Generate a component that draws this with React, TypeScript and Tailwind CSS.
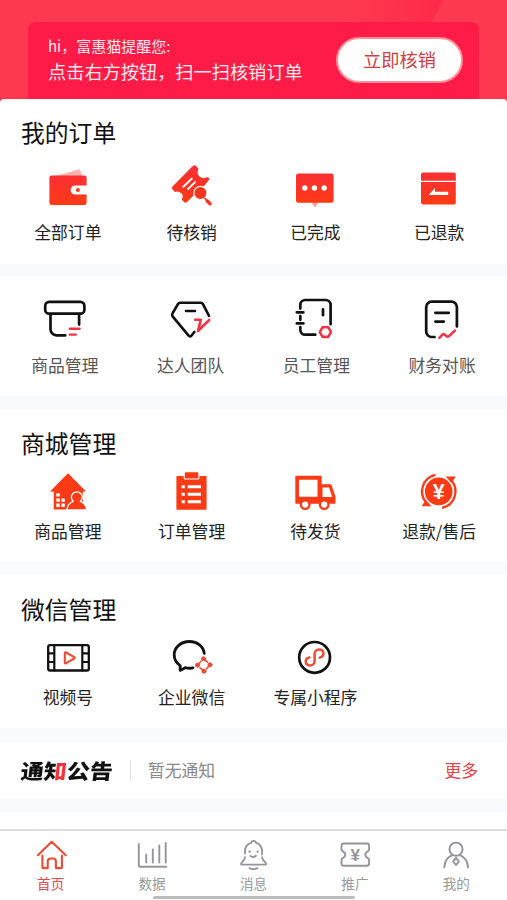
import type { ReactNode } from 'react';

type Entry = { label: string; icon: ReactNode };

const Icon = ({ children }: { children: ReactNode }) => (
  <svg viewBox="0 0 48 48" className="size-12 overflow-visible" fill="none" strokeLinecap="round" strokeLinejoin="round">
    {children}
  </svg>
);

const TabIcon = ({ children }: { children: ReactNode }) => (
  <svg viewBox="0 0 32 32" className="size-8 overflow-visible" fill="none" stroke="currentColor" strokeWidth="1.9" strokeLinecap="round" strokeLinejoin="round">
    {children}
  </svg>
);

const orders: Entry[] = [
  {
    label: '全部订单',
    icon: (
      <Icon>
        <path d="M11 12 34.5 5.4Q35.8 5.2 36.3 6.4L38.5 12Z" fill="#ffb5b0" />
        <rect x="5.4" y="11.4" width="37.2" height="29.6" rx="2.2" fill="url(#red)" />
        <path d="M43 21.4H31.2a4.6 4.6 0 0 0 0 9.2H43Z" fill="#fff" />
        <circle cx="33.9" cy="26" r="2" fill="#fb3420" />
      </Icon>
    ),
  },
  {
    label: '待核销',
    icon: (
      <Icon>
        <path d="M25 1.8Q26.7.6 28 1.8L30.5 5Q28.5 9 31 12Q34.5 15.5 38.5 13.3Q40.6 12.8 41.6 15L37 21 24 33 19 38Q17.5 39.5 16 38L13.6 35.6Q16 32 13.5 29.5Q10.5 26.5 7 28L4.5 25.5Q3 24 4.5 22.5Z" fill="url(#red)" />
        <path d="m15.4 22.8 8.4-8.2M20 25.2l7-7" stroke="#fff" strokeWidth="1.9" />
        <circle cx="32.4" cy="29" r="6.6" fill="#fb3420" stroke="#fff" strokeWidth="1.2" />
        <path d="m36.8 34.3 1.2 1.2" stroke="#fb3420" strokeWidth="1.6" />
        <path d="m39 36.8 3 3" stroke="#fb3420" strokeWidth="3.4" />
      </Icon>
    ),
  },
  {
    label: '已完成',
    icon: (
      <Icon>
        <path d="M20.4 38.5h7l-3.4 5Z" fill="#ff9d90" />
        <rect x="5" y="9.4" width="37.6" height="29.4" rx="2.4" fill="url(#red)" />
        <g fill="#fff">
          <circle cx="13.8" cy="24" r="2.7" />
          <circle cx="23.4" cy="24" r="2.7" />
          <circle cx="33.2" cy="24" r="2.7" />
        </g>
      </Icon>
    ),
  },
  {
    label: '已退款',
    icon: (
      <Icon>
        <rect x="6" y="8.4" width="34.8" height="32" rx="2" fill="url(#red)" />
        <path d="M6 17.4h34.8" stroke="#fff" strokeWidth="1.3" strokeLinecap="butt" />
        <path d="M13.6 31 20 24v3.8h13.2V31Z" fill="#fff" />
      </Icon>
    ),
  },
];

const tools: Entry[] = [
  {
    label: '商品管理',
    icon: (
      <Icon>
        <g stroke="#111" strokeWidth="2.7">
          <rect x="4.2" y="6.9" width="39.2" height="11.8" rx="4" />
          <path d="M9.5 19v15.3a6 6 0 0 0 6 6h8.8M38.1 19v10.6" />
        </g>
        <path d="M28.8 33.7h9.8M28.8 39.6h6" stroke="#ee3445" strokeWidth="2.4" />
      </Icon>
    ),
  },
  {
    label: '达人团队',
    icon: (
      <Icon>
        <path d="m42 20.8-6-11.6Q35.2 7.7 33.6 7.7H13.2Q11.8 7.7 11 9L5.4 18.6Q4.6 20 5.6 21.4L21.6 40.7Q23 42.2 24.4 40.6L27.4 37M19 16h9" stroke="#111" strokeWidth="2.6" />
        <path d="M28.2 24.7h5.6L31 36l11.2-11" stroke="#ee3445" strokeWidth="2.6" />
      </Icon>
    ),
  },
  {
    label: '员工管理',
    icon: (
      <Icon>
        <path d="M8.3 13.6V10a5 5 0 0 1 5-5h20.3a5 5 0 0 1 5 5v19.2M8.3 21v3.8M8.3 32v2.7a5 5 0 0 0 5 5h10M4.8 17.3h6.6M4.8 28.4h6.6M31 14.4v5.8" stroke="#111" strokeWidth="2.7" />
        <path d="M30.6 32.2h5.6l2.8 4.9-2.8 4.8h-5.6l-2.8-4.8Z" stroke="#ee3445" strokeWidth="2.6" />
      </Icon>
    ),
  },
  {
    label: '财务对账',
    icon: (
      <Icon>
        <path d="M38.9 31.4V12.2a5.5 5.5 0 0 0-5.5-5.5H13.7a5.5 5.5 0 0 0-5.5 5.5v24.3a5.5 5.5 0 0 0 5.5 5.5h2.8M17.4 17.8h13.4M17.4 26.6h8.4" stroke="#111" strokeWidth="2.7" />
        <path d="m21.4 42.8 3-3.2q1-1 2.2 0l2 1.6q1.2 1 2.4-.1l6-5.6" stroke="#ee3445" strokeWidth="2.5" />
      </Icon>
    ),
  },
];

const mall: Entry[] = [
  {
    label: '商品管理',
    icon: (
      <Icon>
        <path d="M24 5.3 42 23.4h-3.2v18H9.7v-18H6Z" fill="#fc3a15" />
        <path d="M12.3 25.2h3.4v3.4h-3.4zM12.3 30.4h3.4v3.4h-3.4zM17.4 30.4h3.4v3.4h-3.4zM12.3 35.6h3.4V39h-3.4zM17.4 35.6h3.4V39h-3.4z" fill="#fff" />
        <path d="M23 42q.3-6.4 6.4-8.6a5.4 5.4 0 1 1 6.8 0Q42.3 35.6 42.6 42Z" fill="#fc3a15" stroke="#fff" strokeWidth="1.3" />
      </Icon>
    ),
  },
  {
    label: '订单管理',
    icon: (
      <Icon>
        <rect x="8.4" y="8" width="30.2" height="33.7" rx=".8" fill="#fc3a15" />
        <rect x="16.2" y="3.8" width="14.7" height="7.2" rx="1" fill="#fc3a15" stroke="#fff" strokeWidth="1.1" />
        <path d="M13.6 17.2h3.2v3.1h-3.2zM19.7 17.2H33v3.1H19.7zM13.6 24.7h3.2v3.1h-3.2zM19.7 24.7H33v3.1H19.7zM13.6 32.2h3.2v3.1h-3.2zM19.7 32.2H33v3.1H19.7z" fill="#fff" />
      </Icon>
    ),
  },
  {
    label: '待发货',
    icon: (
      <Icon>
        <path d="M5.2 7.7h24.5q1 0 1 1v7.6h8.6q1 0 1.3 1l3.9 11.2v6.3q0 .9-.9.9H5.2q-.9 0-.9-.9V8.6q0-.9.9-.9Z" fill="#fc3a15" />
        <path d="M8 11.7h18.5v17H8zM31.5 19.6H38l3.2 9.5h-9.7Z" fill="#fff" />
        <circle cx="14.2" cy="36.6" r="4.3" fill="#fff" stroke="#fc3a15" strokeWidth="2.3" />
        <circle cx="33.2" cy="36.6" r="4.3" fill="#fff" stroke="#fc3a15" strokeWidth="2.3" />
      </Icon>
    ),
  },
  {
    label: '退款/售后',
    icon: (
      <Icon>
        <circle cx="23.7" cy="23.4" r="13.8" fill="#fc3a15" />
        <path d="M19.5 7.2A16.8 16.8 0 0 0 10.8 34M28 39.6A16.8 16.8 0 0 0 36.7 12.8" stroke="#fc3a15" strokeWidth="2.3" />
        <path d="m6.6 38.2 4.2-6.4 5.6 6.4ZM40.8 8.5l-4.2 6.4-6-6.4Z" fill="#fc3a15" />
        <text x="23.7" y="30.8" textAnchor="middle" fontSize="21.5" fill="#fff" className="font-['Liberation_Sans',sans-serif] font-bold">¥</text>
      </Icon>
    ),
  },
];

const wechat: Entry[] = [
  {
    label: '视频号',
    icon: (
      <Icon>
        <rect x="4.2" y="12.1" width="40.6" height="25.4" rx="1.8" stroke="#111" strokeWidth="2.3" />
        <path d="M10.3 12v25.4M38.3 12v25.4M4.2 20.4h6M4.2 29h6M38.3 20.4h6.3M38.3 29h6.3" stroke="#111" strokeWidth="2.2" />
        <path d="M20.8 20.2q0-1.4 1.3-.7l8.1 4.6q1 .7 0 1.4l-8.1 4.7q-1.3.6-1.3-.8Z" stroke="#ee4a34" strokeWidth="2.1" />
      </Icon>
    ),
  },
  {
    label: '企业微信',
    icon: (
      <Icon>
        <path d="M36.3 20.4C35.5 13.4 29.2 8.5 21.5 8.5C13 8.5 6.2 14.4 6.2 21.8C6.2 26.3 8.5 30.2 12.2 32.6L12.1 37.4 17.2 34.7Q21.2 35.7 25 34.9" stroke="#111" strokeWidth="2.8" />
        <g fill="#ee4a34" stroke="#ee4a34">
          <path d="m35.5 25.8 4 3.4M42 31.8l-3.4 4M36 38.2l-4-3.4M29.5 32.2l3.4-4" strokeWidth="1.6" />
          <circle cx="35.5" cy="25.8" r="2" />
          <circle cx="42" cy="31.8" r="2" />
          <circle cx="36" cy="38.2" r="2" />
          <circle cx="29.5" cy="32.2" r="2" />
        </g>
      </Icon>
    ),
  },
  {
    label: '专属小程序',
    icon: (
      <Icon>
        <circle cx="23.6" cy="24.4" r="15.4" stroke="#111" strokeWidth="2.7" />
        <path d="M28.8 24.6C31 24 32.5 22.5 32.5 20.5C32.5 18 30.5 16.5 28 16.5C25.5 16.5 23.6 18.5 23.6 21V28C23.6 30.5 21.7 32.5 19.2 32.5C16.5 32.5 14.7 30.8 14.7 28.5C14.7 26.5 16 25 18.4 24.4" stroke="#ee4a34" strokeWidth="2.5" />
      </Icon>
    ),
  },
];

const tabs: Entry[] = [
  {
    label: '首页',
    icon: (
      <TabIcon>
        <path d="M2.8 16.2 16.7 2.8 30.8 16.2M7.4 16.5V28.3q0 .8.8.8h4.5V22.5a3 3 0 0 1 3-3h2.2a3 3 0 0 1 3 3v6.6h5.2q.8 0 .8-.8V16.5" strokeWidth="2.1" />
      </TabIcon>
    ),
  },
  {
    label: '数据',
    icon: (
      <TabIcon>
        <path d="M2.8 5v21.7q0 1 1 1h26.4M10.2 15.6v8M16.8 10.4v13.2M23.3 6.4v17.2M29.7 4v19.6" />
      </TabIcon>
    ),
  },
  {
    label: '消息',
    icon: (
      <TabIcon>
        <path d="M14 3.8Q14.6 2 16.6 2q2 0 2.6 1.8 5.6 1.8 5.9 8.2v3.5M8 14.5V11.7Q8.3 5.6 14 3.8M8 18.2q0 2-2.4 4.3-2.6 3.1-.8 3.1h23.6q1.8 0-.8-3.1-2.5-2.3-2.5-4.3M12.5 29.2q4 2 8 0M13.5 16.8q2.6 2.6 5.4 0" />
        <path d="M12.6 12.6h.1M20.6 12.6h.1" strokeWidth="2.4" />
      </TabIcon>
    ),
  },
  {
    label: '推广',
    icon: (
      <TabIcon>
        <path d="M4.8 4.5h23q2.3 0 2.3 2.3v3.7q0 1-1 1.6-2.8 1.5-2.8 3.6t2.8 3.6q1 .6 1 1.6v3.7q0 2.2-2.3 2.2h-23q-2.3 0-2.3-2.2v-3.7q0-1 1-1.6 2.8-1.5 2.8-3.6t-2.8-3.6q-1-.6-1-1.6V6.8q0-2.3 2.3-2.3Z" />
        <text x="16.3" y="21.6" textAnchor="middle" fontSize="17" fill="currentColor" stroke="none" className="font-['Liberation_Sans',sans-serif] font-bold">¥</text>
      </TabIcon>
    ),
  },
  {
    label: '我的',
    icon: (
      <TabIcon>
        <circle cx="16" cy="10.2" r="6.6" />
        <path d="M4.3 28.4Q4.6 19.2 12.3 16.2M19.8 16.2Q27.6 19.2 28 28.4M16 18.8l-2.8 3.8L16 26l2.8-3.4Z" />
      </TabIcon>
    ),
  },
];

function Section({ title, items, iconGap, labelGap, className }: { title: string; items: Entry[]; iconGap: string; labelGap: string; className: string }) {
  return (
    <section className={`shrink-0 bg-white ${className}`}>
      <h2 className="pl-[21px] text-[23.8px] leading-6 text-[#111]">{title}</h2>
      <div className={`grid grid-cols-4 px-1.5 ${iconGap}`}>
        {items.map((item) => (
          <div key={item.label} className="flex flex-col items-center">
            {item.icon}
            <span className={`text-[16.8px] leading-5 whitespace-nowrap text-[#222] ${labelGap}`}>{item.label}</span>
          </div>
        ))}
      </div>
    </section>
  );
}

export default function App() {
  return (
    <main className="relative flex h-[900px] w-[507px] flex-col overflow-hidden bg-[#f9fafb] font-['Noto_Sans_CJK_SC',sans-serif]">
      <svg className="absolute size-0">
        <defs>
          <linearGradient id="red" x1="0" y1="0" x2="0" y2="1">
            <stop offset="0" stopColor="#fb2f35" />
            <stop offset="1" stopColor="#fc3a15" />
          </linearGradient>
        </defs>
      </svg>

      <header className="relative h-[102px] shrink-0 bg-[#ff3a50] px-7 pt-[22px]">
        <div className="absolute top-0 left-[340px] h-[30px] w-[103px] bg-linear-to-r from-[#ff3a50] to-[#ff2949] [clip-path:polygon(12%_0,100%_0,85%_100%,0_100%)]" />
        <div className="relative flex h-20 items-start justify-between rounded-t-lg bg-[#ff1b47] pr-4 pl-5">
          <div className="pt-3.5 text-[#ffe9ec]">
            <p className="text-[15px] leading-5">hi，富惠猫提醒您:</p>
            <p className="mt-[5px] text-[18.2px] leading-5">点击右方按钮，扫一扫核销订单</p>
          </div>
          <button className="mt-[15px] h-[46px] w-[127px] rounded-full border-2 border-[#ff9196] bg-white pb-0.5 text-[18.2px] leading-none text-[#cc403f]">立即核销</button>
        </div>
      </header>

      <Section title="我的订单" items={orders} className="relative -mt-[3px] h-[165px] rounded-t-[4px] pt-[21px]" iconGap="mt-5" labelGap="mt-2.5" />

      <section className="mt-3 grid h-[120px] shrink-0 grid-cols-4 bg-white px-0.5 pt-[19px]">
        {tools.map((item) => (
          <div key={item.label} className="flex flex-col items-center">
            {item.icon}
            <span className="mt-3 text-[16.8px] leading-5 text-[#555]">{item.label}</span>
          </div>
        ))}
      </section>

      <Section title="商城管理" items={mall} className="mt-3.5 h-[152px] pt-[21px]" iconGap="mt-[13px]" labelGap="mt-[5px]" />
      <Section title="微信管理" items={wechat} className="mt-3 h-[154px] pt-[23px]" iconGap="mt-3" labelGap="mt-1.5" />

      <section className="mt-3.5 flex h-14 shrink-0 items-center bg-white pr-[29px] pl-[21px]">
        <h2 className="w-[92px] -skew-x-6 scale-y-90 bg-[linear-gradient(90deg,#111_38%,#f5323a_38%,#f5323a_50%,#111_50%)] bg-clip-text text-[23px] leading-7 font-black text-transparent">通知公告</h2>
        <span className="ml-[17px] h-5 w-px bg-[#e2e2e2]" />
        <p className="ml-[17px] text-[16.8px] leading-5 text-[#888]">暂无通知</p>
        <a className="ml-auto text-[16.8px] leading-5 text-[#e0444c]">更多</a>
      </section>

      <div className="mt-3.5 h-[17px] shrink-0 bg-white" />

      <nav className="grid h-[71px] shrink-0 grid-cols-5 border-t-2 border-[#dedede] bg-white pt-2">
        {tabs.map((tab, i) => (
          <div key={tab.label} className={`flex flex-col items-center ${i === 0 ? 'text-[#ee4a34]' : 'text-[#949598]'}`}>
            {tab.icon}
            <span className={`mt-[3px] text-[13.6px] leading-[18px] ${i === 0 ? 'text-[#e5484e]' : 'text-[#999]'}`}>{tab.label}</span>
          </div>
        ))}
      </nav>
      <div className="absolute bottom-px left-[153px] h-[3px] w-[202px] rounded-full bg-[#bdbdbd]" />
    </main>
  );
}
